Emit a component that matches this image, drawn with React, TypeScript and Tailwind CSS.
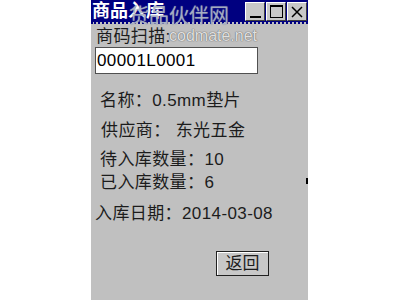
const FONT = "font-['Liberation_Sans','Noto_Sans_CJK_SC',sans-serif]";

function CaptionButton({ kind }: { kind: "min" | "max" | "close" }) {
  return (
    <div className="w-[20px] h-[19px] bg-[#c8c8c8] border border-t-white border-l-white border-r-[#404040] border-b-[#404040] flex items-center justify-center">
      {kind === "min" && <div className="w-[11px] h-[2px] bg-black mt-[10px]" />}
      {kind === "max" && <div className="w-[13px] h-[13px] border border-black border-t-2" />}
      {kind === "close" && (
        <svg width="12" height="12" viewBox="0 0 12 12">
          <path d="M1 1 L11 11 M11 1 L1 11" stroke="#000" strokeWidth="1.5" />
        </svg>
      )}
    </div>
  );
}

const ROW = "h-[20px] text-[17px] leading-[20px] tracking-[0.4px]";

export default function App() {
  return (
    <div className={`w-[400px] h-[300px] bg-white flex ${FONT}`}>
      <div className="ml-[91px] w-[217px] h-full bg-[#c0c0c0] flex flex-col relative overflow-hidden text-[#1c1c1c]">
        <div className="h-[22px] bg-[#000080] flex items-center justify-between pl-[1px] pr-[1px]">
          <span className="text-white font-bold text-[18px] leading-[22px]">商品入库</span>
          <div className="flex gap-[1px] mt-[1px]">
            <CaptionButton kind="min" />
            <CaptionButton kind="max" />
            <CaptionButton kind="close" />
          </div>
        </div>
        <div className="h-[2px] border-b-2 border-dotted border-[#000080]" />

        <div className={`mt-[3px] pl-[5px] ${ROW}`}>商码扫描:</div>
        <div className="ml-[4px] w-[163px] h-[27px] bg-white border border-[#505050] flex items-center pl-[1px] text-[17px] tracking-[0.4px] text-black">
          00001L0001
        </div>

        <div className={`mt-[17px] pl-[9px] ${ROW}`}>名称：0.5mm垫片</div>
        <div className={`mt-[10px] pl-[10px] ${ROW}`}>供应商： 东光五金</div>
        <div className={`mt-[9px] pl-[9px] ${ROW}`}>待入库数量：10</div>
        <div className={`mt-[3px] pl-[9px] ${ROW}`}>已入库数量：6</div>
        <div className={`mt-[11px] pl-[4px] ${ROW}`}>入库日期：2014-03-08</div>

        <div className="mt-[27px] ml-[125px] w-[53px] h-[25px] bg-[#c8c8c8] border border-[#202020] shadow-[inset_1px_1px_0_#ffffff] flex items-center justify-center text-[17px] leading-none">
          返回
        </div>

        <div className="absolute right-0 top-[178px] w-[2px] h-[6px] bg-black" />

        {/* 水印 */}
        <div className="absolute left-[38px] top-[4px] text-[20px] leading-[24px] text-[#b8c0d0]/70 [text-shadow:0_0_1px_#8890a8] pointer-events-none">
          货品伙伴网
        </div>
        <div className="absolute left-[78px] top-[26px] text-[16px] leading-[20px] text-white/80 [text-shadow:0_0_1px_#606060,0_0_1px_#606060] pointer-events-none">
          codmate.net
        </div>
      </div>
    </div>
  );
}
